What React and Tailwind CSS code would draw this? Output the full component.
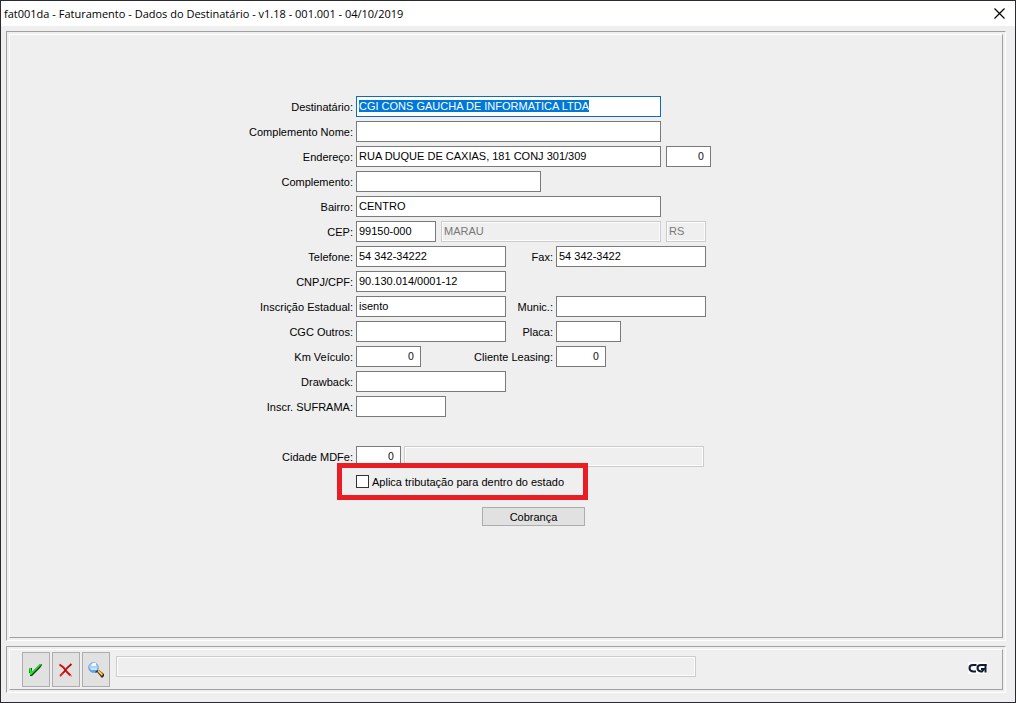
import { useEffect, useRef } from "react";

const fieldBase = "h-[21px] min-w-0 rounded-none border outline-none";
const textField = `${fieldBase} border-[#7a7a7a] bg-white px-[2px] pb-[2px] text-black focus:border-[#0f6cbd] selection:bg-[#0078d7] selection:text-white`;
const numberField = `${fieldBase} border-[#7a7a7a] bg-white pl-[2px] pr-[6px] text-right font-['DejaVu_Sans',sans-serif] text-[10px] text-[#222]`;
const readOnlyField = `${fieldBase} border-[#cccccc] bg-[#efefef] px-[2px] pb-[2px] text-[#787878] shadow-[inset_0_0_0_1px_#fcfcfc]`;

function Label({ htmlFor, children }) {
  return (
    <label htmlFor={htmlFor} className="mr-[3px] w-[104px] shrink-0 whitespace-nowrap text-right">
      {children}
    </label>
  );
}

function Row({ id, label, children }) {
  return (
    <div className="flex h-[21px] items-center">
      <Label htmlFor={id}>{label}</Label>
      {children}
    </div>
  );
}

/* First column of a two-field row, 200px up to where the second input starts */
function Pair({ id, label, children, second }) {
  return (
    <>
      <div className="flex w-[200px] shrink-0 items-center justify-between">
        {children}
        <label htmlFor={id} className="-ml-20 mr-[3px] whitespace-nowrap">
          {label}
        </label>
      </div>
      {second}
    </>
  );
}

function Panel({ className = "", inner = "", children }) {
  return (
    <section
      className={`flex flex-col border border-b-white border-l-[#a0a0a0] border-r-white border-t-[#a0a0a0] p-[2px] ${className}`}
    >
      <div
        className={`grow border border-b-[#a0a0a0] border-l-white border-r-[#a0a0a0] border-t-white ${inner}`}
      >
        {children}
      </div>
    </section>
  );
}

function ToolButton({ label, children }) {
  return (
    <button
      type="button"
      aria-label={label}
      className="flex h-[35px] w-7 items-center justify-center border border-[#adadad] bg-[#e1e1e1]"
    >
      {children}
    </button>
  );
}

function CheckIcon() {
  return (
    <svg width="16" height="16" viewBox="0 0 16 16">
      <path d="M1 6h3v4l8-8h2v1l-2 3-4 4-4 4H2V11H1z" fill="#0b3a0d" />
      <path d="M1 6h2l1 4 8-8h2L8 8l-4 4-1 1H2z" fill="#1fea28" />
    </svg>
  );
}

function CrossIcon() {
  return (
    <svg width="16" height="16" viewBox="0 0 16 16" fill="none">
      <path d="M1.500 2.500l4 3 3 4 4 4" stroke="#d01212" strokeWidth="2" />
      <path d="M13.500 2L9 6l-3 4-4 4" stroke="#b80d0d" strokeWidth="1.800" />
      <path d="M2 14l2-1 1-2M13 14h1" stroke="#ef4a3a" />
    </svg>
  );
}

function SearchIcon() {
  return (
    <svg width="18" height="18" viewBox="0 0 18 18">
      <path d="M10 11l2-2 5 4v2l-2 2z" fill="#3a2408" />
      <path d="M10 10l2-1 4 4-1 2z" fill="#f5b82e" />
      <path d="M11 10l4 4" stroke="#ffe08a" />
      <circle cx="6.500" cy="6.500" r="4.800" fill="#a9d2f8" stroke="#7d9ccb" />
      <path d="M2 7h9a4.500 4.500 0 0 1-9 0z" fill="#62a3ea" />
      <path d="M3 7h7v2H4z" fill="#c6e8fc" />
      <path d="M4 4l2-2h3v3H5z" fill="#f2faff" />
      <path d="M8.500 11.500l2.500-2" stroke="#1c2b50" strokeWidth="1.500" />
    </svg>
  );
}

function Logo() {
  return (
    <svg width="19" height="12" viewBox="0 0 19 12" role="img" aria-label="CGI">
      <rect width="19" height="12" fill="#fafafa" />
      <g fill="none" stroke="#111a33" strokeWidth="2">
        <path d="M8.500 3H5Q1.500 3 1.500 6T5 9.500H8" />
        <path d="M18.500 3H13Q9.500 3 9.500 6T13 9.500H14L16 7H13" />
        <path d="M17.500 2V10.500" />
      </g>
    </svg>
  );
}

export default function App() {
  const first = useRef(null);
  useEffect(() => {
    first.current.focus();
    first.current.select();
  }, []);

  return (
    <main className="flex min-h-screen flex-col border border-[#2b2a30] bg-[#efefef] font-['Liberation_Sans',Arial,sans-serif] text-[11px] leading-[14px] text-black">
      <header className="flex h-[25px] shrink-0 items-center justify-between bg-white pl-[3px] pr-[10px]">
        <h1 className="whitespace-nowrap font-['Open_Sans',sans-serif] text-[11px]">
          fat001da - Faturamento - Dados do Destinatário - v1.18 - 001.001 - 04/10/2019
        </h1>
        <button type="button" aria-label="Fechar">
          <svg width="11" height="11" viewBox="0 0 11 11" className="block">
            <path d="M.5.5l10 10M10.500.5l-10 10" stroke="#000" strokeWidth="1.200" />
          </svg>
        </button>
      </header>

      <div className="flex grow flex-col gap-[5px] pb-[9px] pl-[5px] pr-[9px] pt-[5px]">
        <Panel className="grow" inner="pt-[61px]">
          <form className="mx-auto flex w-[514px] flex-col gap-1" onSubmit={(e) => e.preventDefault()}>
            <Row id="dest" label="Destinatário:">
              <input ref={first} id="dest" className={`${textField} w-[305px]`} defaultValue="CGI CONS GAUCHA DE INFORMATICA LTDA" />
            </Row>
            <Row id="compnome" label="Complemento Nome:">
              <input id="compnome" className={`${textField} w-[305px]`} />
            </Row>
            <Row id="end" label="Endereço:">
              <input id="end" className={`${textField} w-[305px]`} defaultValue="RUA DUQUE DE CAXIAS, 181 CONJ 301/309" />
              <input aria-label="Número" className={`${numberField} ml-[5px] w-[45px]`} defaultValue="0" />
            </Row>
            <Row id="comp" label="Complemento:">
              <input id="comp" className={`${textField} w-[185px]`} />
            </Row>
            <Row id="bairro" label="Bairro:">
              <input id="bairro" className={`${textField} w-[305px]`} defaultValue="CENTRO" />
            </Row>
            <Row id="cep" label="CEP:">
              <input id="cep" className={`${textField} w-20`} defaultValue="99150-000" />
              <input aria-label="Cidade" disabled className={`${readOnlyField} ml-[5px] w-[220px]`} defaultValue="MARAU" />
              <input aria-label="UF" disabled className={`${readOnlyField} ml-[5px] w-10`} defaultValue="RS" />
            </Row>
            <Row id="tel" label="Telefone:">
              <Pair id="fax" label="Fax:" second={<input id="fax" className={`${textField} w-[150px]`} defaultValue="54 342-3422" />}>
                <input id="tel" className={`${textField} w-[150px] shrink-0`} defaultValue="54 342-34222" />
              </Pair>
            </Row>
            <Row id="cnpj" label="CNPJ/CPF:">
              <input id="cnpj" className={`${textField} w-[150px]`} defaultValue="90.130.014/0001-12" />
            </Row>
            <Row id="ie" label="Inscrição Estadual:">
              <Pair id="munic" label="Munic.:" second={<input id="munic" className={`${textField} w-[150px]`} />}>
                <input id="ie" className={`${textField} w-[150px] shrink-0`} defaultValue="isento" />
              </Pair>
            </Row>
            <Row id="cgc" label="CGC Outros:">
              <Pair id="placa" label="Placa:" second={<input id="placa" className={`${textField} w-[65px]`} />}>
                <input id="cgc" className={`${textField} w-[150px] shrink-0`} />
              </Pair>
            </Row>
            <Row id="km" label="Km Veículo:">
              <Pair id="leasing" label="Cliente Leasing:" second={<input id="leasing" className={`${numberField} w-[50px]`} defaultValue="0" />}>
                <input id="km" className={`${numberField} w-[65px] shrink-0`} defaultValue="0" />
              </Pair>
            </Row>
            <Row id="drawback" label="Drawback:">
              <input id="drawback" className={`${textField} w-[150px]`} />
            </Row>
            <Row id="suframa" label="Inscr. SUFRAMA:">
              <input id="suframa" className={`${textField} w-[90px]`} />
            </Row>

            <div className="mt-[25px]">
              <Row id="mdfe" label="Cidade MDFe:">
                <input id="mdfe" className={`${numberField} w-[45px]`} defaultValue="0" />
                <input aria-label="Nome da cidade MDFe" disabled className={`${readOnlyField} ml-[3px] w-[300px]`} />
              </Row>
            </div>

            <div className="relative ml-[107px] flex h-[21px] items-center">
              <input
                id="tributacao"
                type="checkbox"
                className="h-[13px] w-[13px] shrink-0 appearance-none border border-[#333] bg-white checked:bg-[#0078d7]"
              />
              <label htmlFor="tributacao" className="pl-[3px]">
                Aplica tributação para dentro do estado
              </label>
              <div className="pointer-events-none absolute -left-[19px] -top-2 h-[37px] w-[251px] border-5 border-[#ea1c24]" />
            </div>

            <button
              type="button"
              className="ml-[233px] mt-[11px] h-[19px] w-[103px] border border-[#adadad] bg-[#e1e1e1]"
            >
              Cobrança
            </button>
          </form>
        </Panel>

        <Panel inner="flex items-start justify-between pb-[2px] pl-3 pr-[15px] pt-[2px]">
          <div className="flex grow items-start gap-[2px]">
            <ToolButton label="Confirmar">
              <CheckIcon />
            </ToolButton>
            <ToolButton label="Cancelar">
              <CrossIcon />
            </ToolButton>
            <ToolButton label="Pesquisar">
              <SearchIcon />
            </ToolButton>
            <input
              aria-label="Mensagem"
              disabled
              className={`${readOnlyField} ml-1 mt-1 max-w-[580px] grow`}
            />
          </div>
          <div className="mt-[10px]">
            <Logo />
          </div>
        </Panel>
      </div>
    </main>
  );
}
